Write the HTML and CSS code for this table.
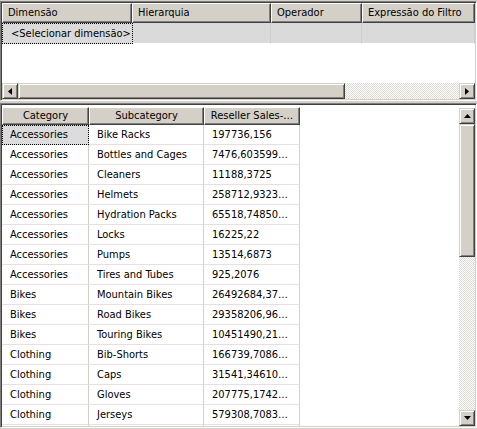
FILE: index.html
```html
<!DOCTYPE html>
<html>
<head>
<meta charset="utf-8">
<link rel="stylesheet" href="styles.css">
</head>
<body>
<div class="win">
  <div class="panel top">
    <div class="filter">
      <div class="frow fhead">
        <div class="hc c1">Dimensão</div>
        <div class="hc c2">Hierarquia</div>
        <div class="hc c3">Operador</div>
        <div class="hc c4">Expressão do Filtro</div>
      </div>
      <div class="frow fnew">
        <div class="nc c1 focus">&lt;Selecionar dimensão&gt;</div>
        <div class="nc c2"></div>
        <div class="nc c3"></div>
        <div class="nc c4"></div>
      </div>
    </div>
    <div class="hscroll">
      <div class="sbtn"><svg width="4" height="7" viewBox="0 0 4 7"><path d="M4 0V7L0 3.5Z" fill="#000"/></svg></div>
      <div class="hthumb"></div>
      <div class="track"></div>
      <div class="sbtn"><svg width="4" height="7" viewBox="0 0 4 7"><path d="M0 0V7L4 3.5Z" fill="#000"/></svg></div>
    </div>
  </div>
  <div class="panel bottom">
    <div class="data">
      <div class="drow dhead">
        <div class="dh d1">Category</div>
        <div class="dh d2">Subcategory</div>
        <div class="dh d3">Reseller Sales-…</div>
      </div>
      <div class="drow"><div class="dc d1 sel">Accessories</div><div class="dc d2">Bike Racks</div><div class="dc d3">197736,156</div></div>
      <div class="drow"><div class="dc d1">Accessories</div><div class="dc d2">Bottles and Cages</div><div class="dc d3">7476,603599…</div></div>
      <div class="drow"><div class="dc d1">Accessories</div><div class="dc d2">Cleaners</div><div class="dc d3">11188,3725</div></div>
      <div class="drow"><div class="dc d1">Accessories</div><div class="dc d2">Helmets</div><div class="dc d3">258712,9323…</div></div>
      <div class="drow"><div class="dc d1">Accessories</div><div class="dc d2">Hydration Packs</div><div class="dc d3">65518,74850…</div></div>
      <div class="drow"><div class="dc d1">Accessories</div><div class="dc d2">Locks</div><div class="dc d3">16225,22</div></div>
      <div class="drow"><div class="dc d1">Accessories</div><div class="dc d2">Pumps</div><div class="dc d3">13514,6873</div></div>
      <div class="drow"><div class="dc d1">Accessories</div><div class="dc d2">Tires and Tubes</div><div class="dc d3">925,2076</div></div>
      <div class="drow"><div class="dc d1">Bikes</div><div class="dc d2">Mountain Bikes</div><div class="dc d3">26492684,37…</div></div>
      <div class="drow"><div class="dc d1">Bikes</div><div class="dc d2">Road Bikes</div><div class="dc d3">29358206,96…</div></div>
      <div class="drow"><div class="dc d1">Bikes</div><div class="dc d2">Touring Bikes</div><div class="dc d3">10451490,21…</div></div>
      <div class="drow"><div class="dc d1">Clothing</div><div class="dc d2">Bib-Shorts</div><div class="dc d3">166739,7086…</div></div>
      <div class="drow"><div class="dc d1">Clothing</div><div class="dc d2">Caps</div><div class="dc d3">31541,34610…</div></div>
      <div class="drow"><div class="dc d1">Clothing</div><div class="dc d2">Gloves</div><div class="dc d3">207775,1742…</div></div>
      <div class="drow"><div class="dc d1">Clothing</div><div class="dc d2">Jerseys</div><div class="dc d3">579308,7083…</div></div>
      <div class="drow"><div class="dc d1"></div><div class="dc d2"></div><div class="dc d3"></div></div>
    </div>
    <div class="vscroll">
      <div class="sbtn"><svg width="7" height="4" viewBox="0 0 7 4"><path d="M0 4H7L3.5 0Z" fill="#000"/></svg></div>
      <div class="vthumb"></div>
      <div class="track"></div>
      <div class="sbtn"><svg width="7" height="4" viewBox="0 0 7 4"><path d="M0 0H7L3.5 4Z" fill="#000"/></svg></div>
    </div>
  </div>
</div>
</body>
</html>
```
FILE: styles.css
```css
html, body {
  margin: 0;
  padding: 0;
  background: #d4d0c8;
}
body {
  width: 477px;
  height: 429px;
  overflow: hidden;
  font-family: "DejaVu Sans Condensed", "DejaVu Sans", sans-serif;
  font-size: 11px;
  color: #000;
}
.win {
  display: flex;
  flex-direction: column;
  gap: 2px;
  padding-top: 1px;
}
.panel {
  border: 1px solid;
  border-color: #808080 #ffffff #ffffff #808080;
  box-shadow: inset 1px 1px 0 #404040, inset -1px -1px 0 #d4d0c8;
  padding: 1px;
  background: #fff;
  box-sizing: border-box;
  width: 477px;
}
.top {
  height: 100px;
  display: flex;
  flex-direction: column;
}
.filter {
  flex: 1;
  overflow: hidden;
}
.frow {
  display: flex;
}
.c1 { width: 130px; }
.c2 { width: 139px; }
.c3 { width: 91px; }
.c4 { width: 113px; }
.hc {
  box-sizing: border-box;
  height: 20px;
  line-height: 18px;
  padding-left: 5px;
  background: #d4d0c8;
  border-top: 1px solid #fff;
  border-left: 1px solid #fff;
  border-right: 1px solid #404040;
  border-bottom: 1px solid #404040;
  box-shadow: inset -1px -1px 0 #808080;
  white-space: nowrap;
  overflow: hidden;
}
.nc {
  box-sizing: border-box;
  height: 21px;
  line-height: 19px;
  background: #dadada;
  border-right: 1px solid #cfcfcf;
  border-bottom: 1px solid #fff;
  white-space: nowrap;
}
.focus {
  width: 131px;
  padding-left: 8px;
  border: 1px dotted #000;
}
.hscroll {
  display: flex;
  height: 16px;
}
.sbtn {
  box-sizing: border-box;
  width: 16px;
  height: 16px;
  flex: none;
  background: #d4d0c8;
  border-top: 1px solid #d4d0c8;
  border-left: 1px solid #d4d0c8;
  border-right: 1px solid #404040;
  border-bottom: 1px solid #404040;
  box-shadow: inset 1px 1px 0 #fff, inset -1px -1px 0 #808080;
  display: flex;
  align-items: center;
  justify-content: center;
}
.hthumb {
  box-sizing: border-box;
  width: 327px;
  height: 16px;
  background: #d4d0c8;
  border-top: 1px solid #d4d0c8;
  border-left: 1px solid #d4d0c8;
  border-right: 1px solid #404040;
  border-bottom: 1px solid #404040;
  box-shadow: inset 1px 1px 0 #fff, inset -1px -1px 0 #808080;
}
.track {
  flex: 1;
  background-color: #ece9e2;
  background-image: repeating-conic-gradient(#ffffff 0 25%, #dedad3 0 50%);
  background-size: 2px 2px;
}
.bottom {
  height: 325px;
  display: flex;
}
.data {
  flex: 1;
  overflow: hidden;
  padding-top: 2px;
}
.drow {
  display: flex;
}
.d1 { width: 87px; }
.d2 { width: 115px; }
.d3 { width: 96px; }
.dh {
  box-sizing: border-box;
  height: 18px;
  line-height: 16px;
  text-align: center;
  background: #d4d0c8;
  border-top: 1px solid #fff;
  border-left: 1px solid #fff;
  border-right: 1px solid #404040;
  border-bottom: 1px solid #404040;
  box-shadow: inset -1px -1px 0 #808080;
  white-space: nowrap;
  overflow: hidden;
}
.dc {
  box-sizing: border-box;
  height: 20px;
  line-height: 19px;
  padding-left: 8px;
  background: #fff;
  border-right: 1px solid #d4d0c8;
  border-bottom: 1px solid #ecdede;
  white-space: nowrap;
  overflow: hidden;
}
.sel {
  background: #dcdcdc;
  border: 1px dotted #000;
  padding-left: 7px;
  line-height: 18px;
}
.vscroll {
  display: flex;
  flex-direction: column;
  width: 16px;
  margin-top: 3px;
}
.vthumb {
  box-sizing: border-box;
  height: 133px;
  background: #d4d0c8;
  border-top: 1px solid #d4d0c8;
  border-left: 1px solid #d4d0c8;
  border-right: 1px solid #404040;
  border-bottom: 1px solid #404040;
  box-shadow: inset 1px 1px 0 #fff, inset -1px -1px 0 #808080;
}
```
